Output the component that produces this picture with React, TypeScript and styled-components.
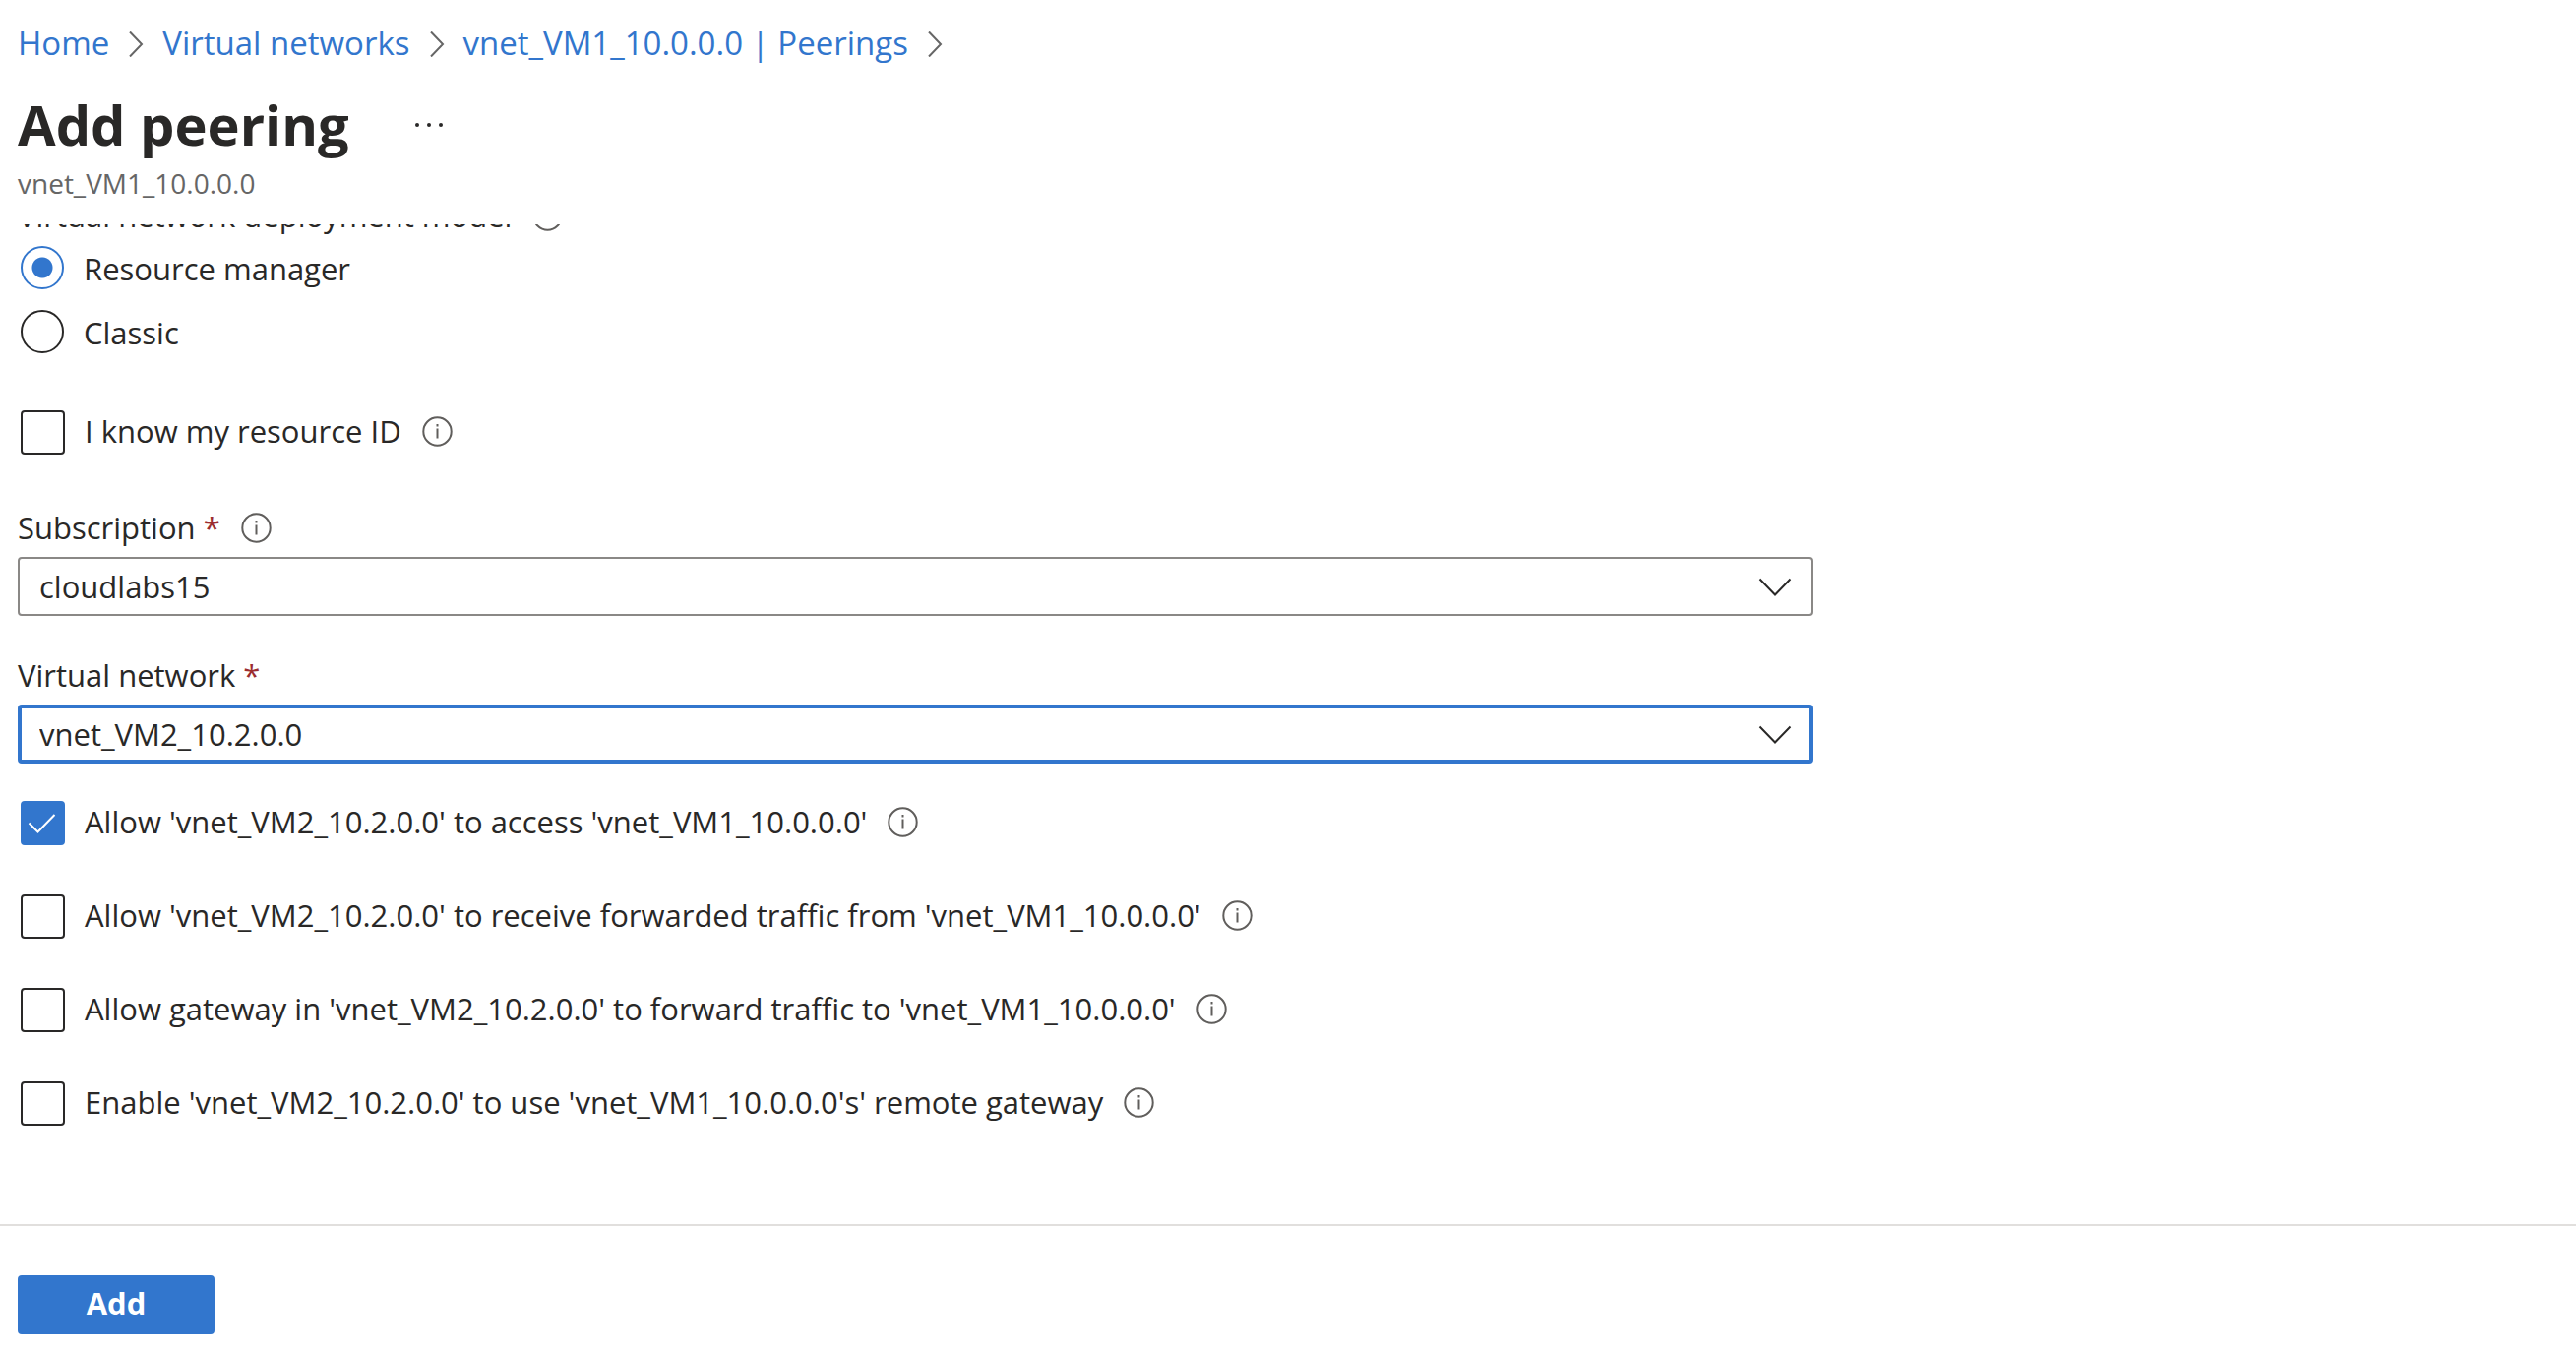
import React, { useState } from "react";
import styled, { createGlobalStyle } from "styled-components";

const blue = "#3276cd";
const ink = "#292827";

const GlobalStyle = createGlobalStyle`
  *, *::before, *::after { box-sizing: border-box; }
  body {
    margin: 0;
    background: #fff;
    color: ${ink};
    font-family: "Open Sans", "Noto Sans", sans-serif;
    font-size: 31px;
    line-height: 42px;
  }
  button, select, input { font: inherit; color: inherit; }
`;

const Page = styled.div`
  display: flex;
  flex-direction: column;
  height: 100vh;
`;

const Header = styled.header`
  flex: none;
  padding: 22px 18px;
`;

const Crumbs = styled.nav`
  display: flex;
  align-items: center;
  gap: 19px;
  font-size: 33px;
  line-height: 44px;
`;

const Crumb = styled.a`
  color: ${blue};
  text-decoration: none;
`;

const CrumbChevron = styled.svg`
  width: 16px;
  height: 28px;
  fill: none;
  stroke: #666;
  stroke-width: 2;
`;

const TitleRow = styled.div`
  display: flex;
  align-items: center;
  gap: 61px;
  margin-top: 20px;
`;

const Title = styled.h1`
  margin: 0;
  font-size: 56px;
  font-weight: 700;
  line-height: 80px;
`;

const MoreButton = styled.button`
  display: flex;
  padding: 4px;
  border: 0;
  background: none;
  svg { width: 32px; height: 16px; fill: ${ink}; }
`;

const Subtitle = styled.p`
  margin: 0;
  color: #666;
  font-size: 28px;
  line-height: 40px;
`;

const Viewport = styled.main`
  flex: 1;
  min-height: 0;
  overflow: hidden;
  padding: 0 18px;
`;

const Form = styled.form`
  max-width: 1825px;
  margin-top: -30px;
`;

const RadioGroup = styled.fieldset`
  margin: 0 0 58px;
  padding: 0;
  border: 0;
`;

const Legend = styled.legend`
  display: flex;
  align-items: center;
  gap: 21px;
  margin-bottom: 10px;
  padding: 0;
`;

const Options = styled.div`
  display: grid;
  gap: 21px;
`;

const ChoiceRow = styled.div`
  display: flex;
  gap: 20px;
  padding-left: 3px;
`;

const RadioInput = styled.input`
  appearance: none;
  flex: none;
  width: 44px;
  height: 44px;
  margin: 0;
  border: 2px solid ${ink};
  border-radius: 50%;
  &:checked {
    border-color: ${blue};
    background: radial-gradient(circle, ${blue} 10px, #fff 11px);
  }
`;

const RadioLabel = styled.label`
  align-self: flex-end;
`;

const BoxFrame = styled.span`
  display: grid;
  flex: none;
  width: 45px;
  height: 45px;
  > * { grid-area: 1 / 1; }
`;

const BoxInput = styled.input`
  appearance: none;
  width: 45px;
  height: 45px;
  margin: 0;
  border: 2px solid ${ink};
  border-radius: 4px;
  &:checked { border-color: ${blue}; background: ${blue}; }
`;

const Tick = styled.svg`
  width: 45px;
  height: 45px;
  fill: none;
  stroke: #fff;
  stroke-width: 2;
  pointer-events: none;
`;

const LabelLine = styled.div`
  display: flex;
  align-items: center;
  gap: 21px;
  height: 42px;
`;

const Info = styled.svg`
  flex: none;
  width: 31px;
  height: 31px;
  fill: none;
  stroke: #605e5c;
  stroke-width: 2;
`;

const Field = styled.div`
  display: grid;
  gap: 9px;
  margin-top: ${(p: { $space: number }) => p.$space}px;
`;

const Required = styled.span`
  color: #9b2d30;
`;

const SelectFrame = styled.div`
  display: grid;
  align-items: center;
  > * { grid-area: 1 / 1; }
`;

const Select = styled.select<{ $active?: boolean }>`
  appearance: none;
  width: 100%;
  height: 60px;
  padding: 0 ${(p) => (p.$active ? 18 : 20)}px;
  border: ${(p) => (p.$active ? `4px solid ${blue}` : "2px solid #8a8886")};
  border-radius: 4px;
  background: #fff;
`;

const SelectChevron = styled.svg`
  justify-self: end;
  width: 34px;
  height: 20px;
  margin: 2px 22px 0 0;
  fill: none;
  stroke: ${ink};
  stroke-width: 2;
  pointer-events: none;
`;

const Checks = styled.div`
  display: grid;
  gap: 50px;
  margin-top: 38px;
`;

const Footer = styled.footer`
  flex: none;
  padding: 50px 18px 16px;
  border-top: 2px solid #e1dfdd;
`;

const AddButton = styled.button`
  width: 200px;
  height: 60px;
  padding: 0 0 4px;
  border: 0;
  border-radius: 4px;
  background: ${blue};
  color: #fff;
  font-weight: 700;
`;

const InfoIcon = () => (
  <Info viewBox="0 0 31 31" role="img" aria-label="More information">
    <circle cx="15.5" cy="15.5" r="14.2" />
    <path d="M15.5 12.5v10M15.5 8v2.5" />
  </Info>
);

const Separator = () => (
  <CrumbChevron viewBox="0 0 16 28" aria-hidden="true">
    <path d="M2 2.5 14 15 2 27.5" />
  </CrumbChevron>
);

type ChoiceProps = { id: string; text: string; info?: boolean; initial?: boolean };

function Check({ id, text, info = true, initial = false }: ChoiceProps) {
  const [on, setOn] = useState(initial);
  return (
    <ChoiceRow>
      <BoxFrame>
        <BoxInput id={id} type="checkbox" checked={on} onChange={() => setOn(!on)} />
        {on && (
          <Tick viewBox="0 0 45 45" aria-hidden="true">
            <path d="m8.5 22.5 9 9 17-17.5" />
          </Tick>
        )}
      </BoxFrame>
      <LabelLine>
        <label htmlFor={id}>{text}</label>
        {info && <InfoIcon />}
      </LabelLine>
    </ChoiceRow>
  );
}

type DropProps = {
  id: string;
  label: string;
  value: string;
  space: number;
  info?: boolean;
  active?: boolean;
};

function Dropdown({ id, label, value, space, info, active }: DropProps) {
  return (
    <Field $space={space}>
      <LabelLine>
        <label htmlFor={id}>
          {label} <Required>*</Required>
        </label>
        {info && <InfoIcon />}
      </LabelLine>
      <SelectFrame>
        <Select id={id} $active={active} defaultValue={value}>
          <option>{value}</option>
        </Select>
        <SelectChevron viewBox="0 0 34 20" aria-hidden="true">
          <path d="m1.5 1.5 15.5 16 15.5-16" />
        </SelectChevron>
      </SelectFrame>
    </Field>
  );
}

const models = ["Resource manager", "Classic"];

export default function App() {
  const [model, setModel] = useState(models[0]);
  return (
    <Page>
      <GlobalStyle />
      <Header>
        <Crumbs aria-label="Breadcrumb">
          <Crumb href="#home">Home</Crumb>
          <Separator />
          <Crumb href="#networks">Virtual networks</Crumb>
          <Separator />
          <Crumb href="#peerings">vnet_VM1_10.0.0.0 | Peerings</Crumb>
          <Separator />
        </Crumbs>
        <TitleRow>
          <Title>Add peering</Title>
          <MoreButton type="button" aria-label="More actions">
            <svg viewBox="0 0 32 16">
              <circle cx="4" cy="9" r="2" />
              <circle cx="16" cy="9" r="2" />
              <circle cx="28" cy="9" r="2" />
            </svg>
          </MoreButton>
        </TitleRow>
        <Subtitle>vnet_VM1_10.0.0.0</Subtitle>
      </Header>
      <Viewport>
        <Form id="peering" onSubmit={(e) => e.preventDefault()}>
          <RadioGroup>
            <Legend>
              Virtual network deployment model
              <InfoIcon />
            </Legend>
            <Options>
              {models.map((name, i) => (
                <ChoiceRow key={name}>
                  <RadioInput
                    id={`model-${i}`}
                    type="radio"
                    name="model"
                    checked={model === name}
                    onChange={() => setModel(name)}
                  />
                  <RadioLabel htmlFor={`model-${i}`}>{name}</RadioLabel>
                </ChoiceRow>
              ))}
            </Options>
          </RadioGroup>
          <Check id="resource-id" text="I know my resource ID" />
          <Dropdown id="subscription" label="Subscription" value="cloudlabs15" space={53} info />
          <Dropdown id="network" label="Virtual network" value="vnet_VM2_10.2.0.0" space={39} active />
          <Checks>
            <Check id="access" text="Allow 'vnet_VM2_10.2.0.0' to access 'vnet_VM1_10.0.0.0'" initial />
            <Check id="forwarded" text="Allow 'vnet_VM2_10.2.0.0' to receive forwarded traffic from 'vnet_VM1_10.0.0.0'" />
            <Check id="gateway" text="Allow gateway in 'vnet_VM2_10.2.0.0' to forward traffic to 'vnet_VM1_10.0.0.0'" />
            <Check id="remote" text="Enable 'vnet_VM2_10.2.0.0' to use 'vnet_VM1_10.0.0.0's' remote gateway" />
          </Checks>
        </Form>
      </Viewport>
      <Footer>
        <AddButton type="submit" form="peering">Add</AddButton>
      </Footer>
    </Page>
  );
}
